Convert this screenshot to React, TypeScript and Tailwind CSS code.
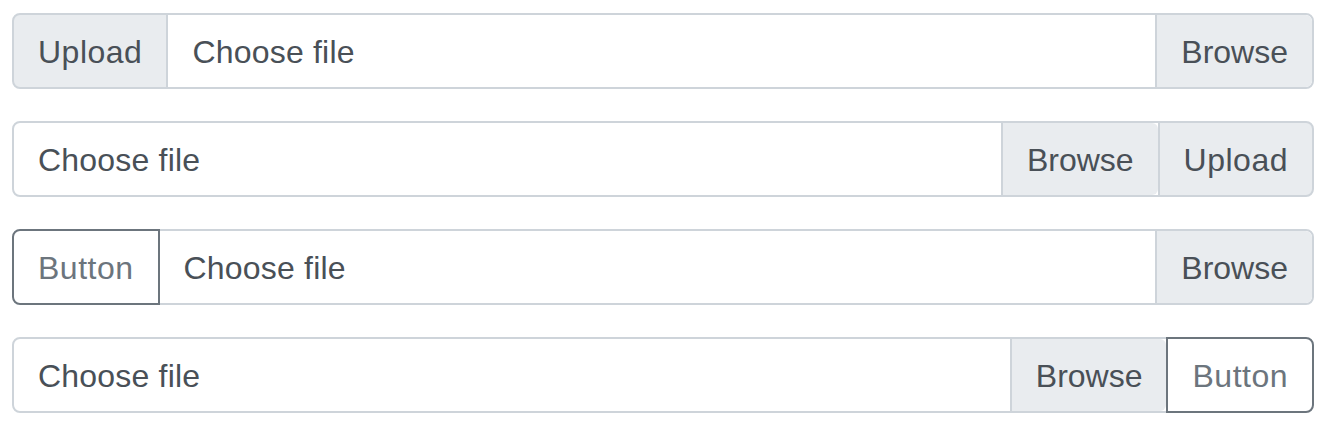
import React from "react";

const txt = "px-6 pt-[13px] pb-[11px] text-[32px] leading-[48px] whitespace-nowrap";

function Label({ roundLeft, roundRight }: { roundLeft?: boolean; roundRight?: boolean }) {
  return (
    <div
      className={
        "flex-1 -ml-[2px] first:ml-0 flex border-2 border-[#ced4da] bg-white overflow-hidden " +
        (roundLeft ? "rounded-l-lg " : "") +
        (roundRight ? "rounded-r-lg " : "")
      }
    >
      <span className={"flex-1 text-[#495057] tracking-[0.2px] " + txt}>Choose file</span>
      <span className={"bg-[#e9ecef] text-[#495057] border-l-2 border-[#ced4da] rounded-r-[6px] " + txt}>Browse</span>
    </div>
  );
}

export default function App() {
  return (
    <div
      className="bg-white w-[1328px] h-[430px] pt-[13px] pl-3 pr-[14px] flex flex-col gap-8"
      style={{ fontFamily: '"Liberation Sans", Arial, sans-serif' }}
    >
      <div className="flex">
        <div className={"bg-[#e9ecef] text-[#495057] border-2 border-[#ced4da] rounded-l-lg tracking-[0.5px] " + txt}>Upload</div>
        <Label roundRight />
      </div>
      <div className="flex">
        <Label roundLeft />
        <div className={"-ml-[2px] bg-[#e9ecef] text-[#495057] border-2 border-[#ced4da] rounded-r-lg tracking-[0.5px] " + txt}>Upload</div>
      </div>
      <div className="flex">
        <div className={"relative z-10 bg-white text-[#6c757d] border-2 border-[#6c757d] rounded-l-lg tracking-[0.5px] " + txt}>Button</div>
        <Label roundRight />
      </div>
      <div className="flex">
        <Label roundLeft />
        <div className={"relative z-10 -ml-[2px] bg-white text-[#6c757d] border-2 border-[#6c757d] rounded-r-lg tracking-[0.5px] " + txt}>Button</div>
      </div>
    </div>
  );
}
